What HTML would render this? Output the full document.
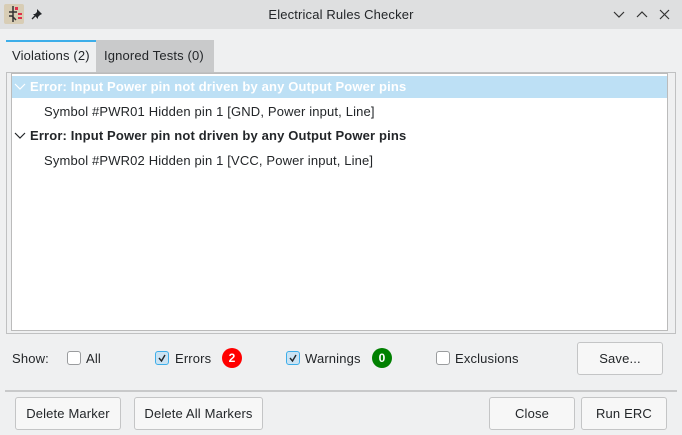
<!DOCTYPE html><html><head><style>
body{margin:0;width:682px;height:435px;background:#eff0f1;font-family:"Liberation Sans",sans-serif;font-size:13px;letter-spacing:0.15px;color:#232629;position:relative;overflow:hidden}
.a{position:absolute}
.btn{position:absolute;border:1px solid #c4c5c6;border-radius:3px;background:#f7f7f7;text-align:center;line-height:31px;font-size:13px;box-sizing:border-box;height:33px}
.cb{position:absolute;width:14px;height:14px;border:1px solid #9a9c9e;border-radius:3px;background:#fff;box-sizing:border-box}
.cb.on{background:#cbe3f3;border-color:#3daee9}
.badge{position:absolute;width:20px;height:20px;border-radius:10px;color:#fff;font-weight:bold;text-align:center;line-height:20px;font-size:12px}
</style></head><body>
<div class="a" style="left:0;top:0;width:682px;height:29px;background:#dedfe0"></div>
<div class="a" style="left:4px;top:4px;width:20px;height:20px;background:#d8cdb5;border-radius:2px"></div>
<svg class="a" style="left:4px;top:4px" width="20" height="20"><path d="M9 2v16M5 8h8M5 12h3l4 4" stroke="#333" stroke-width="1.5" fill="none"/><rect x="11" y="3" width="3" height="3" fill="#e0304a"/><rect x="14" y="9" width="4" height="2" fill="#e0304a"/><rect x="14" y="13" width="4" height="2" fill="#e0304a"/></svg>
<svg class="a" style="left:31px;top:8px" width="12" height="12"><path d="M6 1l5 5-2 1-2 2 0 2-5-5 2 0 2-2z" fill="#232629"/><path d="M4 8l-3 3" stroke="#232629" stroke-width="1.3"/></svg>
<div class="a" style="left:0;top:7px;width:682px;text-align:center">Electrical Rules Checker</div>
<svg class="a" style="left:612px;top:8px" width="65" height="14"><path d="M2 4l5 5 5-5M25 9l5-5 5 5M48 2l9 9M57 2l-9 9" stroke="#333" stroke-width="1.2" fill="none"/></svg>
<div class="a" style="left:96px;top:40px;width:118px;height:32px;background:#c9cacb"></div>
<div class="a" style="left:104px;top:48px">Ignored Tests (0)</div>
<div class="a" style="left:6px;top:40px;width:90px;height:33px;background:#eff0f1;border-top:2px solid #3daee9;box-sizing:border-box"></div>
<div class="a" style="left:12px;top:48px">Violations (2)</div>
<div class="a" style="left:6px;top:72px;width:670px;height:262px;border:1px solid #c0c1c2;box-sizing:border-box"></div>
<div class="a" style="left:11px;top:73px;width:657px;height:258px;background:#fff;border:1px solid #bbb;box-sizing:border-box"></div>
<div class="a" style="left:12px;top:76px;width:655px;height:22px;background:#bde0f5"></div>
<svg class="a" style="left:14px;top:83px" width="12" height="8"><path d="M1 1l5 5 5-5" stroke="#fff" stroke-width="1.2" fill="none"/></svg>
<div class="a" style="left:30px;top:79px;color:#fff;font-weight:bold">Error: Input Power pin not driven by any Output Power pins</div>
<div class="a" style="left:44px;top:104px">Symbol #PWR01 Hidden pin 1 [GND, Power input, Line]</div>
<svg class="a" style="left:14px;top:132px" width="12" height="8"><path d="M1 1l5 5 5-5" stroke="#232629" stroke-width="1.2" fill="none"/></svg>
<div class="a" style="left:30px;top:128px;font-weight:bold">Error: Input Power pin not driven by any Output Power pins</div>
<div class="a" style="left:44px;top:153px">Symbol #PWR02 Hidden pin 1 [VCC, Power input, Line]</div>
<div class="a" style="left:12px;top:351px">Show:</div>
<div class="cb" style="left:67px;top:351px"></div><div class="a" style="left:86px;top:351px">All</div>
<div class="cb on" style="left:155px;top:351px"></div><svg class="a" style="left:156px;top:352px" width="12" height="12"><path d="M3 6l2.5 3L9 3" stroke="#232629" stroke-width="1.4" fill="none"/></svg><div class="a" style="left:175px;top:351px">Errors</div>
<div class="badge" style="left:222px;top:348px;background:#f00">2</div>
<div class="cb on" style="left:286px;top:351px"></div><svg class="a" style="left:287px;top:352px" width="12" height="12"><path d="M3 6l2.5 3L9 3" stroke="#232629" stroke-width="1.4" fill="none"/></svg><div class="a" style="left:305px;top:351px">Warnings</div>
<div class="badge" style="left:372px;top:348px;background:#008000">0</div>
<div class="cb" style="left:436px;top:351px"></div><div class="a" style="left:455px;top:351px">Exclusions</div>
<div class="btn" style="left:577px;top:342px;width:86px">Save...</div>
<div class="a" style="left:5px;top:390px;width:672px;height:2px;background:#c8c9ca"></div>
<div class="btn" style="left:15px;top:397px;width:106px">Delete Marker</div>
<div class="btn" style="left:134px;top:397px;width:129px">Delete All Markers</div>
<div class="btn" style="left:489px;top:397px;width:86px">Close</div>
<div class="btn" style="left:581px;top:397px;width:86px">Run ERC</div>
</body></html>
